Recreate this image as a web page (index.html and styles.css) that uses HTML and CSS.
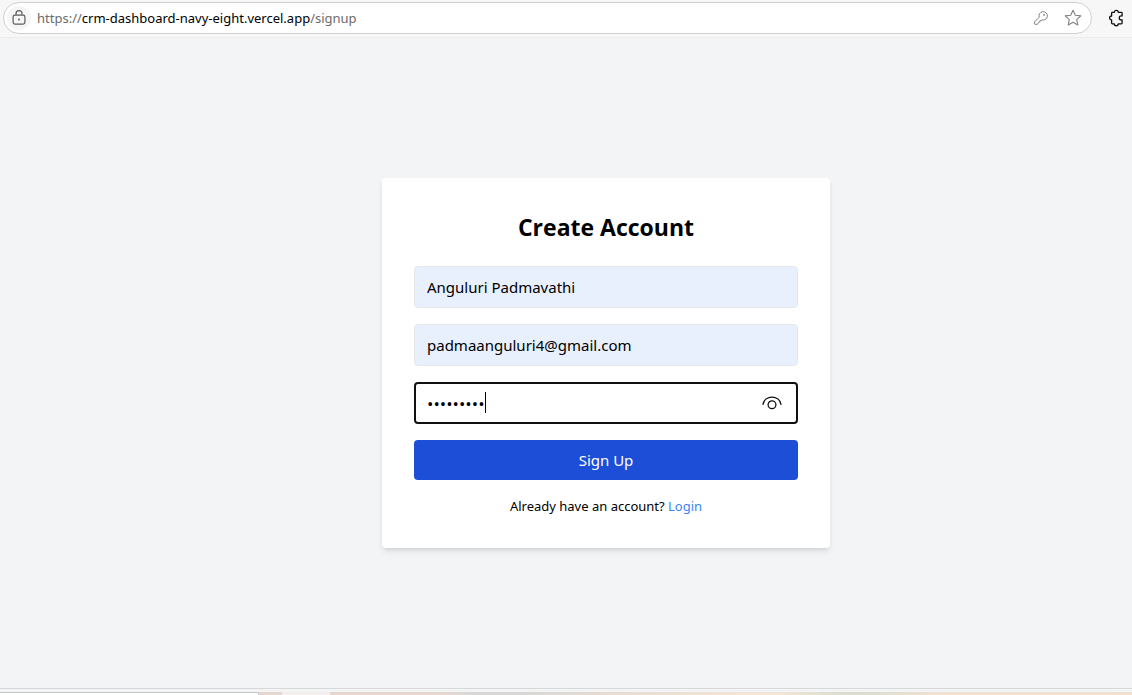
FILE: index.html
```html
<!DOCTYPE html>
<html lang="en">
<head>
<meta charset="utf-8">
<meta name="viewport" content="width=device-width, initial-scale=1">
<title>Create Account</title>
<link rel="stylesheet" href="styles.css">
</head>
<body>
<header class="toolbar">
  <div class="address-bar">
    <button class="site-info" type="button" aria-label="Site information">
      <svg width="14" height="16" viewBox="0 0 14 16" fill="none" stroke="#5c5c5c" stroke-width="1.2"><rect x="1.1" y="5.1" width="11.8" height="9" rx="1.8"/><path d="M4 5V3.6a3 3 0 0 1 6 0V5"/><circle cx="7" cy="9.6" r="1" fill="#5c5c5c" stroke="none"/></svg>
    </button>
    <p class="url">https://<span class="host">crm-dashboard-navy-eight.vercel.app</span>/signup</p>
    <button class="tool" type="button" aria-label="Saved passwords">
      <svg width="16" height="16" viewBox="0 0 16 16" fill="none" stroke="#808080" stroke-width="1" stroke-linejoin="round"><path d="M6.2 7.2A4.2 4.2 0 1 1 9 9.9L8.2 10.6 6.9 10.7 6.7 12.1 5.4 12.4 5 13.7 4.1 14.3H1.9L1.5 13.8V12Z"/><circle cx="11" cy="4.9" r=".9" fill="#808080" stroke="none"/></svg>
    </button>
    <button class="tool" type="button" aria-label="Add to favorites">
      <svg width="18" height="18" viewBox="0 0 18 18" fill="none" stroke="#808080" stroke-width="1.1" stroke-linejoin="round"><path d="M9 1.3 11.3 6.3 16.8 6.9 12.7 10.6 13.8 16 9 13.3 4.2 16 5.3 10.6 1.2 6.9 6.7 6.3Z"/></svg>
    </button>
  </div>
  <button class="tool extensions" type="button" aria-label="Extensions">
    <svg width="16" height="18" viewBox="0 0 16 18" fill="none" stroke="#111" stroke-width="1.3" stroke-linejoin="round"><path d="M4.6 3.3H6.3A2 2 0 0 1 10.3 3.3H13.3Q14.1 3.3 14.1 4.1V6.9H13.3A2 2 0 0 0 13.3 10.9H14.1V14Q14.1 14.8 13.3 14.8H10.3A2 2 0 0 1 6.3 14.8H4.4Q3.6 14.8 3.6 14V11A2 2 0 0 1 3.6 7V4.1Q3.6 3.3 4.6 3.3"/></svg>
  </button>
</header>
<main class="page">
  <form class="card">
    <h1 class="title">Create Account</h1>
    <div class="fields">
      <input class="field filled" type="text" aria-label="Name" value="Anguluri Padmavathi">
      <input class="field filled" type="email" aria-label="Email" value="padmaanguluri4@gmail.com">
      <div class="password">
        <input class="field focused" type="password" aria-label="Password" value="padma1234">
        <span class="caret"></span>
        <button class="reveal" type="button" aria-label="Show password">
          <svg width="20" height="14" viewBox="0 0 20 14" fill="none" stroke="#111" stroke-width="1.3" stroke-linecap="round"><path d="M1 8.3C1.8 4 5.5 1.2 10 1.2S18.2 4 19 8.3"/><circle cx="10" cy="8.7" r="3.9"/></svg>
        </button>
      </div>
      <button class="submit" type="button">Sign Up</button>
    </div>
    <p class="login">Already have an account? <a href="#login">Login</a></p>
  </form>
</main>
<footer class="desktop"><div class="search"></div><div class="gap"></div><div class="tile"></div><div class="wallpaper"></div></footer>
</body>
</html>
```
FILE: styles.css
```css
* { box-sizing: border-box; }
body {
  margin: 0;
  min-height: 100vh;
  display: flex;
  flex-direction: column;
  background: #f3f4f6;
  color: #000;
  font-family: "Noto Sans", "Open Sans", sans-serif;
}
button { padding: 0; border: 0; background: none; font: inherit; }
svg { display: block; }
.toolbar {
  display: flex;
  align-items: flex-start;
  height: 38px;
  padding: 2px 8px 0 3px;
  gap: 16px;
  background: #f7f7f7;
  border-bottom: 1px solid #ebecee;
}
.address-bar {
  flex: 1;
  display: flex;
  align-items: center;
  height: 32px;
  padding: 0 9px 0 3px;
  border: 1px solid #cfcfcf;
  border-radius: 16px;
  background: #fff;
}
.site-info {
  display: grid;
  place-items: center;
  width: 24px;
  height: 24px;
  border-radius: 50%;
  background: #f5f5f5;
}
.url {
  flex: 1;
  margin: 0 0 0 6px;
  color: #6b6b6b;
  font-size: 13px;
  line-height: 20px;
  white-space: nowrap;
}
.host { color: #000; }
.tool { margin-left: 15px; }
.extensions { margin: 7px 0 0; }
.page {
  flex: 1;
  display: grid;
  place-items: center;
  padding-left: 80px;
}
.card {
  width: 100%;
  max-width: 448px;
  padding: 32px;
  border-radius: 4px;
  background: #fff;
  box-shadow: 0 4px 6px -1px rgb(0 0 0 / 10%), 0 2px 4px -2px rgb(0 0 0 / 10%);
}
.title {
  margin: 0 0 24px;
  font-family: "Open Sans", "Noto Sans", sans-serif;
  font-size: 23px;
  font-weight: 700;
  line-height: 34px;
  height: 32px;
  text-align: center;
}
.fields { display: grid; gap: 16px; }
.field {
  display: block;
  width: 100%;
  height: 42px;
  padding: 0 12px;
  border: 1px solid #e5e7eb;
  border-radius: 4px;
  background: #fff;
  color: #000;
  font-family: inherit;
  font-size: 15px;
  outline: 0;
}
.filled { background: #e8f0fe; }
.focused {
  padding: 0 11px;
  border: 2px solid #101010;
  font-family: "Open Sans", "Noto Sans", sans-serif;
  font-size: 17px;
}
.password { position: relative; }
.caret {
  position: absolute;
  top: 10px;
  left: 71px;
  width: 1px;
  height: 21px;
  background: #000;
}
.reveal { position: absolute; top: 14px; right: 16px; }
.submit {
  height: 40px;
  border-radius: 4px;
  background: #1d4ed8;
  color: #fff;
  font-size: 15px;
}
.login {
  margin: 16px 0 0;
  font-size: 13px;
  line-height: 20px;
  text-align: center;
}
.login a { color: #3b82f6; text-decoration: none; }
.desktop {
  display: flex;
  height: 7px;
  padding-top: 3px;
  border-top: 1px solid #d6d7d9;
}
.search {
  width: 259px;
  border: solid #c8c8c8;
  border-width: 1px 1px 0 0;
  background: #fff;
}
.gap { width: 23px; background: #e5d7cf; }
.tile { width: 48px; background: #f4efec; }
.wallpaper {
  flex: 1;
  background: linear-gradient(90deg, #e5d7cf 0 14%, #d8d7d5 18% 24%, #e8dbd2 35%, #f4e6d7 55%, #d9dccf 65%, #f1e1d3 76%, #efe0d2);
}
```
